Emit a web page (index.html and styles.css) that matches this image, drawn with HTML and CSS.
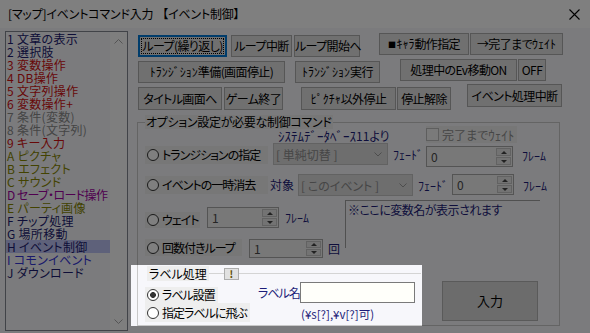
FILE: index.html
```html
<!DOCTYPE html>
<html>
<head>
<meta charset="utf-8">
<title>イベントコマンド入力</title>
<link rel="stylesheet" href="styles.css">
</head>
<body>
<div class="window">
  <header class="titlebar">
    <span class="title">[マップ]イベントコマンド入力</span>
    <span class="title sub">【イベント制御】</span>
    <span class="close"><svg width="11" height="11" viewBox="0 0 11 11"><path d="M0.5 0.5L10.5 10.5M10.5 0.5L0.5 10.5" stroke="#000" stroke-width="1.1" fill="none"/></svg></span>
  </header>

  <div class="client">
    <div class="cmdlist">
      <ul class="items">
        <li class="c-navy">1 文章の表示</li>
        <li class="c-navy">2 選択肢</li>
        <li class="c-red">3 変数操作</li>
        <li class="c-red">4 DB操作</li>
        <li class="c-red">5 文字列操作</li>
        <li class="c-red">6 変数操作+</li>
        <li class="c-gray">7 条件(変数)</li>
        <li class="c-gray">8 条件(文字列)</li>
        <li class="c-red">9 キー入力</li>
        <li class="c-olive">A ピクチャ</li>
        <li class="c-olive">B エフェクト</li>
        <li class="c-olive">C サウンド</li>
        <li class="c-purple tight">D セーブ・ロード操作</li>
        <li class="c-olive">E パーティ画像</li>
        <li class="c-navy">F チップ処理</li>
        <li class="c-navy">G 場所移動</li>
        <li class="c-navy sel">H イベント制御</li>
        <li class="c-blue">I コモンイベント</li>
        <li class="c-navy">J ダウンロード</li>
      </ul>
      <div class="vscroll">
        <svg width="9" height="5" viewBox="0 0 9 5"><path d="M0.5 4.5L4.5 0.5L8.5 4.5" stroke="#a8a8a8" fill="none"/></svg>
        <svg width="9" height="5" viewBox="0 0 9 5"><path d="M0.5 0.5L4.5 4.5L8.5 0.5" stroke="#a8a8a8" fill="none"/></svg>
      </div>
    </div>

    <div class="panel">
      <div class="btnrow row1">
        <button class="btn focus b-loop">ループ(繰り返し)</button>
        <button class="btn b-break">ループ中断</button>
        <button class="btn b-start">ループ開始へ</button>
        <button class="btn b-chara"><span class="sq">■</span><span class="hw">ｷｬﾗ</span>動作指定</button>
        <button class="btn b-wait">→完了まで<span class="hw">ｳｪｲﾄ</span></button>
      </div>
      <div class="btnrow row2">
        <button class="btn b-trprep"><span class="hw">ﾄﾗﾝｼﾞｼｮﾝ</span>準備(画面停止)</button>
        <button class="btn b-trexec"><span class="hw">ﾄﾗﾝｼﾞｼｮﾝ</span>実行</button>
        <button class="btn b-evmove">処理中のEv移動ON</button>
        <button class="btn b-off">OFF</button>
      </div>
      <div class="btnrow row3">
        <button class="btn b-title">タイトル画面へ</button>
        <button class="btn b-gameend">ゲーム終了</button>
        <button class="btn b-picstop"><span class="hw">ﾋﾟｸﾁｬ</span>以外停止</button>
        <button class="btn b-unstop">停止解除</button>
        <button class="btn b-abort">イベント処理中断</button>
      </div>

      <fieldset class="opts">
        <legend>オプション設定が必要な制御コマンド</legend>

        <div class="orow rowA">
          <span class="note sysdb"><span class="hw">ｼｽﾃﾑﾃﾞｰﾀﾍﾞｰｽ</span>11より</span>
          <span class="check"><i class="box"></i>完了まで<span class="hw">ｳｪｲﾄ</span></span>
        </div>

        <div class="orow rowB">
          <span class="radio r-trans"><i class="dot"></i>トランジションの指定</span>
          <div class="combo cb-trans"><span>[ 単純切替 ]</span><svg width="8" height="5" viewBox="0 0 8 5"><path d="M0.5 0.5L4 4L7.5 0.5" stroke="#9a9a9a" fill="none"/></svg></div>
          <span class="note hw fade1">ﾌｪｰﾄﾞ</span>
          <div class="spin sp-fade1"><span class="val">0</span><span class="updown"><i class="up"></i><i class="dn"></i></span></div>
          <span class="note hw frame1">ﾌﾚｰﾑ</span>
        </div>

        <div class="orow rowC">
          <span class="radio r-erase"><i class="dot"></i>イベントの一時消去</span>
          <span class="note target">対象</span>
          <div class="combo cb-target"><span>[ このイベント ]</span><svg width="8" height="5" viewBox="0 0 8 5"><path d="M0.5 0.5L4 4L7.5 0.5" stroke="#9a9a9a" fill="none"/></svg></div>
          <span class="note hw fade2">ﾌｪｰﾄﾞ</span>
          <div class="spin sp-fade2"><span class="val">0</span><span class="updown"><i class="up"></i><i class="dn"></i></span></div>
          <span class="note hw frame2">ﾌﾚｰﾑ</span>
        </div>

        <div class="orow rowD">
          <div class="leftcol">
            <div class="orow waitrow">
              <span class="radio r-wait"><i class="dot"></i>ウェイト</span>
              <div class="spin sp-wait"><span class="val">1</span><span class="updown"><i class="up"></i><i class="dn"></i></span></div>
              <span class="note hw frame3">ﾌﾚｰﾑ</span>
            </div>
            <div class="orow looprow">
              <span class="radio r-loop"><i class="dot"></i>回数付きループ</span>
              <div class="spin sp-loop"><span class="val">1</span><span class="updown"><i class="up"></i><i class="dn"></i></span></div>
              <span class="note times">回</span>
            </div>
          </div>
          <div class="varbox">※ここに変数名が表示されます</div>
        </div>

        <div class="orow rowF">
          <div class="lblgroup">
            <div class="lblhead">
              <span class="lbltitle">ラベル処理</span>
              <span class="rule short"></span>
              <span class="bang">!</span>
              <span class="rule"></span>
            </div>
            <div class="lblbody">
              <div class="lblradios">
                <span class="radio r-set"><i class="dot on"></i>ラベル設置</span>
                <span class="radio r-jump"><i class="dot"></i>指定ラベルに飛ぶ</span>
              </div>
              <div class="lblname">
                <div class="namerow">
                  <span class="note namelbl">ラベル名</span>
                  <span class="textbox"></span>
                </div>
                <span class="note hint">(¥s[?],¥v[?]可)</span>
              </div>
            </div>
          </div>
          <button class="btn b-enter">入力</button>
        </div>
      </fieldset>
    </div>
  </div>

  <div class="spot"></div>
</div>
</body>
</html>
```

FILE: styles.css
```css
body {
  margin: 0;
  background: #f7f7fb;
  font-family: "Noto Sans CJK JP", "Noto Sans", sans-serif;
  font-feature-settings: "palt";
  color: #000;
}

.window {
  width: 590px;
  height: 333px;
  position: relative;
  overflow: hidden;
}

/* half-width katakana keep their normal advance */
.hw {
  font-feature-settings: normal;
  font-size: 13px;
}

/* title bar */
.titlebar {
  height: 28px;
  background: #ffffff;
  display: flex;
  align-items: center;
  padding-left: 8px;
}

.title {
  font-size: 12px;
  line-height: 16px;
  letter-spacing: -0.2px;
}

.title.sub {
  margin-left: 9px;
}

.close {
  margin-left: auto;
  margin-right: 10px;
  display: flex;
}

/* main area */
.client {
  display: flex;
  padding: 3px 0 0 5px;
}

.cmdlist {
  width: 121px;
  height: 298px;
  border: 1px solid #828790;
  display: flex;
  background: #f7f7fb;
}

.items {
  list-style: none;
  margin: 0;
  padding: 0;
  flex: 1;
  font-size: 12px;
  line-height: 13px;
  letter-spacing: 0.3px;
}

.items li {
  height: 13px;
  padding-left: 1px;
  white-space: nowrap;
}

.items li.tight {
  letter-spacing: -0.6px;
}

.items li.sel {
  background: #bcc2f4;
}

.c-navy { color: #1c1c70; }
.c-red { color: #d01010; }
.c-gray { color: #8a8a8a; }
.c-olive { color: #868600; }
.c-purple { color: #a000a0; }
.c-blue { color: #3434d8; }

.vscroll {
  width: 17px;
  background: #fdfdfd;
  display: flex;
  flex-direction: column;
  justify-content: space-between;
  align-items: center;
  padding: 7px 0 6px;
}

.panel {
  flex: 1;
  padding-left: 10px;
  display: flex;
  flex-direction: column;
}

/* command buttons */
.btnrow {
  display: flex;
  align-items: flex-start;
}

.row1 { margin-top: 2px; height: 24px; }
.row2 { margin-top: 2px; height: 24px; }
.row3 { margin-top: 1px; height: 26px; }

.btn {
  box-sizing: border-box;
  height: 22px;
  border: 1px solid #adadad;
  background: #e1e1e1;
  font-family: "Noto Sans CJK JP", sans-serif;
  font-feature-settings: "palt";
  font-size: 12px;
  line-height: 18px;
  letter-spacing: -0.6px;
  padding: 0;
  color: #000;
  white-space: nowrap;
  text-align: center;
}

.btn .hw {
  font-size: 12px;
  letter-spacing: 0;
}

.btn.focus {
  border: 2px solid #0078d7;
  outline: 1px dotted #000;
  outline-offset: -4px;
}

.sq {
  font-size: 8px;
  vertical-align: 1px;
  margin-right: 1px;
}

.b-loop { width: 89px; margin-top: 2px; }
.b-break { width: 61px; margin: 2px 0 0 4px; }
.b-start { width: 66px; margin: 2px 0 0 2px; }
.b-chara { width: 90px; margin-left: 19px; }
.b-wait { width: 93px; margin-left: 1px; }

.b-trprep { width: 147px; margin-top: 2px; }
.b-trexec { width: 85px; margin: 2px 0 0 10px; }
.b-evmove { width: 117px; margin-left: 20px; }
.b-off { width: 28px; margin-left: 1px; }

.b-title { width: 84px; height: 23px; margin-top: 3px; }
.b-gameend { width: 59px; height: 23px; margin: 3px 0 0 2px; }
.b-picstop { width: 95px; height: 23px; margin: 3px 0 0 18px; }
.b-unstop { width: 54px; height: 23px; margin: 3px 0 0 1px; }
.b-abort { width: 95px; height: 23px; margin-left: 16px; }

/* option group */
.opts {
  margin: 5px 0 0 -1px;
  width: 423px;
  height: 211px;
  box-sizing: border-box;
  border: 1px solid #c8c8c8;
  padding: 0 7px;
  min-width: 0;
}

.opts > legend {
  padding: 0 1px;
  font-size: 12px;
  line-height: 14px;
  letter-spacing: -0.3px;
  background: #eeeeee;
}

.orow {
  display: flex;
  align-items: flex-start;
}

.note {
  font-size: 12px;
  color: #1c1c78;
  white-space: nowrap;
}

.rowA { height: 14px; }

.sysdb {
  margin-left: 133px;
  width: 148px;
  line-height: 14px;
}

.check {
  display: flex;
  align-items: center;
  height: 17px;
  margin-top: -3px;
  padding-right: 3px;
  background: #eeeeee;
  font-size: 12px;
  color: #8d8d8d;
}

.check .box {
  width: 11px;
  height: 11px;
  border: 1px solid #bcbcbc;
  background: #f4f4f4;
  margin-right: 3px;
}

.radio {
  display: flex;
  align-items: center;
  box-sizing: border-box;
  background: #eeeeee;
  font-size: 12px;
  line-height: 14px;
  letter-spacing: -1px;
  padding-left: 2px;
  white-space: nowrap;
}

.dot {
  width: 10px;
  height: 10px;
  border: 1px solid #333;
  border-radius: 50%;
  background: #fff;
  margin-right: 3px;
  flex: none;
}

.dot.on {
  background: radial-gradient(circle, #333 0 2.6px, #fff 3.2px);
}

.combo {
  display: flex;
  align-items: center;
  box-sizing: border-box;
  height: 22px;
  border: 1px solid #c4c4c4;
  background: #dcdcdc;
  color: #8c8c8c;
  font-size: 12px;
  padding: 0 5px 0 2px;
  justify-content: space-between;
  white-space: nowrap;
}

.spin {
  display: flex;
  box-sizing: border-box;
  border: 1px solid #a8a8a8;
  background: #f0f0f0;
}

.spin .val {
  flex: 1;
  padding-left: 4px;
  font-size: 12px;
  color: #4a4a4a;
  display: flex;
  align-items: center;
}

.updown {
  width: 15px;
  display: flex;
  flex-direction: column;
  padding: 1px 1px 1px 0;
  gap: 1px;
}

.updown i {
  flex: 1;
  border: 1px solid #c4c4c4;
  background: #e6e6e6;
  display: flex;
  align-items: center;
  justify-content: center;
}

.updown i::after {
  content: "";
  border-left: 3px solid transparent;
  border-right: 3px solid transparent;
}

.updown .up::after { border-bottom: 3px solid #444; }
.updown .dn::after { border-top: 3px solid #444; }

/* row B */
.rowB { height: 24px; }
.r-trans { width: 123px; height: 18px; margin-top: 3px; }
.cb-trans { width: 115px; margin-left: 5px; }
.fade1 { margin-left: 5px; width: 33px; line-height: 24px; }
.sp-fade1 { width: 87px; height: 21px; margin-top: 3px; }
.frame1 { margin-left: 9px; line-height: 26px; }

/* row C */
.rowC { margin-top: 7px; height: 22px; }
.r-erase { width: 123px; height: 18px; margin-top: 2px; }
.target { margin-left: 2px; width: 28px; line-height: 22px; }
.cb-target { width: 115px; }
.fade2 { margin-left: 5px; width: 34px; line-height: 24px; }
.sp-fade2 { width: 62px; height: 21px; }
.frame2 { margin-left: 9px; line-height: 24px; }

/* row D */
.rowD { margin-top: 4px; height: 57px; }
.leftcol { width: 200px; display: flex; flex-direction: column; }
.waitrow { margin-top: 7px; }
.r-wait { width: 55px; height: 16px; margin-top: 5px; }
.sp-wait { width: 72px; height: 21px; margin-left: 7px; }
.frame3 { margin-left: 6px; line-height: 22px; }
.looprow { margin-top: 10px; }
.r-loop { width: 97px; height: 17px; }
.sp-loop { width: 74px; height: 19px; margin-left: 7px; }
.times { margin-left: 5px; line-height: 19px; }

.varbox {
  width: 195px;
  height: 48px;
  box-sizing: border-box;
  border-top: 1px solid #a0a0a0;
  border-left: 1px solid #a0a0a0;
  padding: 1px 2px;
  font-size: 12px;
  line-height: 16px;
  letter-spacing: -0.5px;
  color: #1c1c78;
}

/* label processing */
.rowF { margin-top: 9px; }

.lblgroup {
  width: 276px;
  display: flex;
  flex-direction: column;
}

.lblhead {
  display: flex;
  align-items: center;
  height: 15px;
}

.lbltitle {
  margin-left: 2px;
  padding: 0 2px;
  background: #eeeeee;
  font-size: 12px;
  line-height: 15px;
}

.rule {
  flex: 1;
  height: 1px;
  background: #d4d4d4;
}

.rule.short {
  flex: none;
  width: 15px;
}

.bang {
  width: 13px;
  height: 10px;
  border: 1px solid #adadad;
  background: #e1e1e1;
  font-size: 10px;
  line-height: 10px;
  font-weight: bold;
  text-align: center;
  color: #5c4a00;
}

.lblbody {
  display: flex;
}

.lblradios {
  width: 113px;
  display: flex;
  flex-direction: column;
  align-items: flex-start;
  margin-top: 6px;
}

.r-set { width: 73px; height: 16px; }
.r-jump { width: 105px; height: 19px; }

.lblname {
  display: flex;
  flex-direction: column;
  margin-top: 1px;
}

.namerow {
  display: flex;
}

.namelbl {
  width: 42px;
  line-height: 22px;
  letter-spacing: -1px;
}

.textbox {
  width: 115px;
  height: 21px;
  box-sizing: border-box;
  border: 1px solid #7a7a7a;
  background: #fffffa;
}

.hint {
  margin: 3px 0 0 43px;
  font-size: 11.5px;
  line-height: 14px;
}

.b-enter {
  width: 96px;
  height: 40px;
  margin: 15px 0 0 21px;
  background: #d8d8d8;
  border-color: #b4b4b4;
  font-size: 13px;
  letter-spacing: 0;
}

/* dim overlay around the highlighted control */
.spot {
  position: absolute;
  left: 131px;
  top: 265px;
  width: 291px;
  height: 61px;
  box-shadow: 0 0 0 700px rgba(0, 0, 0, 0.5);
  pointer-events: none;
}
```
